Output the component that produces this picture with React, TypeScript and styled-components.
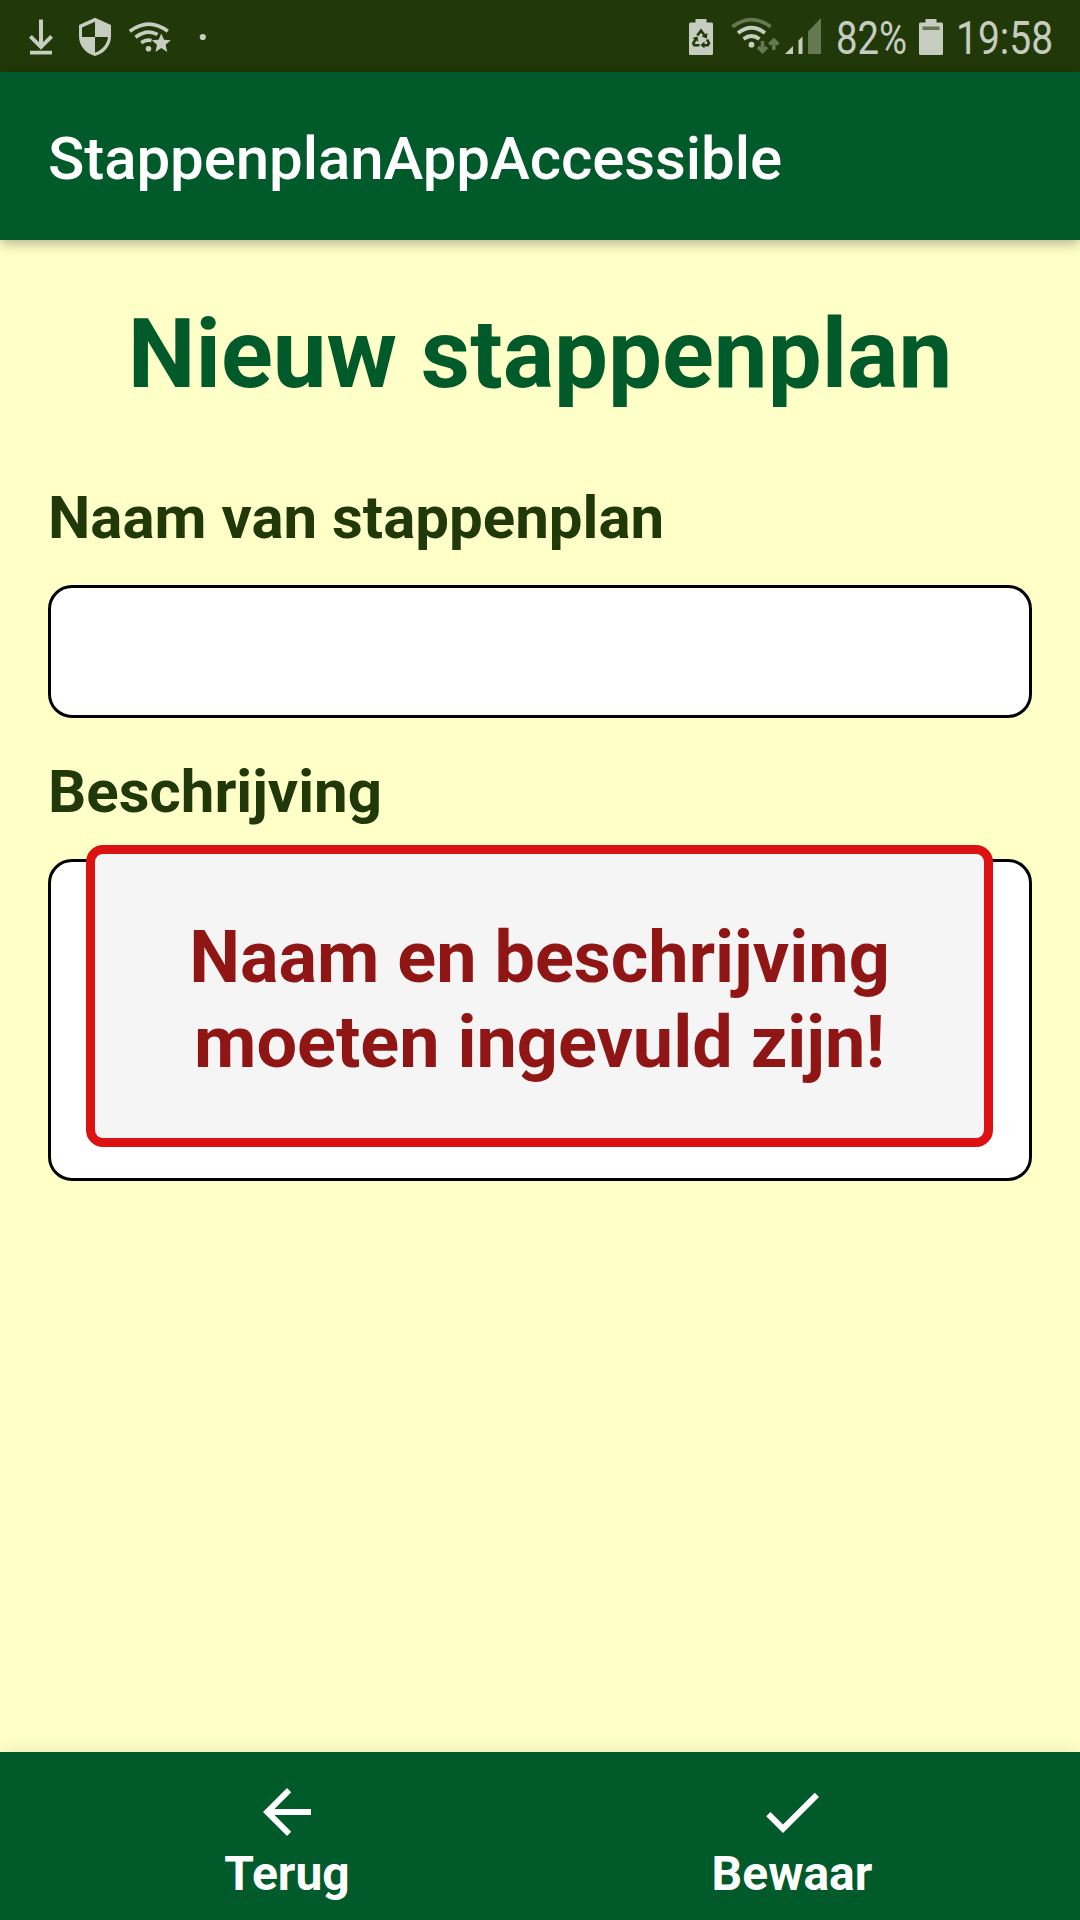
import React from "react";
import styled, { createGlobalStyle } from "styled-components";

const GlobalStyle = createGlobalStyle`
  html, body { margin: 0; padding: 0; }
  *, *::before, *::after { box-sizing: border-box; }
  body { font-family: Roboto, "Liberation Sans", sans-serif; }
`;

const colors = {
  dark: "#213909",
  primary: "#005a29",
  page: "#ffffc8",
  status: "#c6ccc0",
  faded: "#647851",
  error: "#dc1212",
  errorText: "#901515",
};

const Screen = styled.div`
  width: 1080px;
  height: 1920px;
  display: flex;
  flex-direction: column;
  background: ${colors.page};
  overflow: hidden;
`;

const StatusBar = styled.div`
  height: 72px;
  flex: none;
  display: flex;
  justify-content: space-between;
  background: ${colors.dark};
  color: ${colors.status};
`;

const StatusGroup = styled.div`
  display: flex;
  height: 72px;
`;

const StatusText = styled.span<{ $width: number; $gap: number; $scale: number }>`
  width: ${(p) => p.$width}px;
  margin-left: ${(p) => p.$gap}px;
  font-size: 45.5px;
  line-height: 77px;
  white-space: nowrap;
  transform: scaleX(${(p) => p.$scale});
  transform-origin: left center;
`;

const Glyph = styled.svg`
  display: block;
  height: 72px;
  flex: none;
`;

const AppBar = styled.header`
  height: 168px;
  flex: none;
  display: flex;
  align-items: center;
  padding: 5px 48px 0;
  background: ${colors.primary};
  box-shadow: 0 3px 12px rgba(0, 0, 0, 0.32);
  z-index: 1;
`;

const AppTitle = styled.span`
  color: #fff;
  font-size: 60px;
  font-weight: 500;
  line-height: 70px;
  letter-spacing: -0.08px;
`;

const Content = styled.main`
  flex: 1;
  display: flex;
  flex-direction: column;
  padding: 58px 48px 0;
`;

const Heading = styled.h1`
  margin: 0 0 73px;
  font-size: 96px;
  font-weight: 700;
  line-height: 112px;
  text-align: center;
  color: ${colors.primary};
`;

const Label = styled.label`
  display: block;
  height: 102px;
  font-size: 60px;
  font-weight: 700;
  line-height: 70px;
  color: ${colors.dark};
`;

const Field = styled.div<{ $height: number; $after: number }>`
  position: relative;
  height: ${(p) => p.$height}px;
  margin-bottom: ${(p) => p.$after}px;
  border: 3px solid #000;
  border-radius: 24px;
  background: #fff;
`;

const Toast = styled.div`
  position: absolute;
  left: 35px;
  top: -17px;
  width: 907px;
  height: 302px;
  padding-top: 61px;
  border: 9px solid ${colors.error};
  border-radius: 17px;
  background: #f5f5f5;
  color: ${colors.errorText};
  font-size: 72px;
  font-weight: 700;
  line-height: 85px;
  text-align: center;
`;

const BottomBar = styled.nav`
  height: 168px;
  flex: none;
  display: flex;
  justify-content: center;
  padding-right: 1px;
  background: ${colors.primary};
  box-shadow: 0 0 18px rgba(0, 0, 0, 0.1);
  z-index: 1;
`;

const NavItem = styled.div`
  width: 505px;
  padding-top: 24px;
  display: flex;
  flex-direction: column;
  align-items: center;
  color: #fff;
  font-size: 48px;
  font-weight: 700;
  line-height: 56px;
`;

const NavIcon = styled.svg`
  width: 72px;
  height: 72px;
  margin-bottom: -2px;
  fill: currentColor;
`;

const Notifications = () => (
  <Glyph width="230" viewBox="0 0 230 72" fill={colors.status}>
    <path d="M39 19.5h4v22.8l7.2-7.3 2.8 2.8L41 49.8l-12-12L31.8 35l7.2 7.3zM30 50.8h22v3.8H30z" />
    <path
      fillRule="evenodd"
      d="M95 17.8 111 25v11c0 10-6.800 17.500-16 20-9.200-2.500-16-10-16-20V25zM95 21.800V37h13c0 0-.5 11-13 15.800V37H82V27.500z"
    />
    <g fill="none" stroke={colors.status} strokeWidth="3.600">
      <path d="M129.800 31.300Q149 17 167.800 31.300" />
      <path d="M135.500 37.200Q147 28.500 157.500 34.500" />
      <path d="M141.200 42.800Q146 39.200 151.500 40.500" />
    </g>
    <circle cx="148.500" cy="48.700" r="2.800" />
    <path d="m161.300 33.400 2.700 6.300 6.800.6-5.200 4.500 1.600 7.300-5.900-4-5.900 4 1.600-7.300-5.200-4.500 6.800-.6z" />
    <circle cx="202.800" cy="37" r="3.100" />
  </Glyph>
);

const SystemIcons = () => (
  <Glyph width="140" viewBox="686 0 140 72" fill={colors.status}>
    <path d="M695.500 19h11v3.500h5q1.500 0 1.500 1.500v29.500q0 1.500-1.500 1.500h-21q-1.500 0-1.500-1.500V24q0-1.500 1.500-1.500h5z" />
    <g fill="none" stroke={colors.dark} strokeWidth="2.600">
      <path d="m697.300 35.500 3.700-4.800 4.300 5.600M707 39.500l2 3.700-1.300 2h-4.700M699.500 45.200h-5.200l-1-2 3-5" />
    </g>
    <g fill={colors.dark}>
      <path d="m707.500 33-.7 5.500-5.200-2zM704.500 41.500v7l-4-3.500zM692.500 38l5-1.500.8 5.200z" />
    </g>
    <path d="M732.300 26.800Q751.500 12.500 770.700 26.800" fill="none" stroke={colors.faded} strokeWidth="3.800" />
    <g fill="none" stroke={colors.status} strokeWidth="3.800">
      <path d="M738 33Q751.500 22.500 765 33" />
      <path d="M743.500 39Q751.500 33 759.500 39" />
    </g>
    <circle cx="751.500" cy="44.700" r="2.900" />
    <g fill="none" stroke={colors.faded} strokeWidth="3.600">
      <path d="M762.500 41v10.500M758 47l4.500 4.500 4.500-4.500M773.800 50V39.500M769.300 44.500l4.500-4.500 4.500 4.500" />
    </g>
    <path d="M785 54l8-8v8zM798.500 40.500l4-4V54h-4z" />
    <path fill={colors.faded} d="M808 31.500 821 18v36h-13z" />
  </Glyph>
);

const BatteryIcon = () => (
  <Glyph width="24" viewBox="919 0 24 72" fill={colors.status}>
    <path d="M925.500 19h11v3.500h5q1.500 0 1.500 1.500v29.500q0 1.500-1.500 1.500h-21q-1.500 0-1.500-1.500V24q0-1.500 1.500-1.500h5z" />
    <path fill={colors.faded} d="M922.500 26.500h17V30h-17z" />
  </Glyph>
);

export default function App() {
  return (
    <>
      <GlobalStyle />
      <Screen>
        <StatusBar>
          <StatusGroup>
            <Notifications />
          </StatusGroup>
          <StatusGroup>
            <SystemIcons />
            <StatusText $width={83.5} $gap={9.5} $scale={0.842}>82%</StatusText>
            <BatteryIcon />
            <StatusText $width={124} $gap={13} $scale={0.857}>19:58</StatusText>
          </StatusGroup>
        </StatusBar>
        <AppBar>
          <AppTitle>StappenplanAppAccessible</AppTitle>
        </AppBar>
        <Content>
          <Heading>Nieuw stappenplan</Heading>
          <Label>Naam van stappenplan</Label>
          <Field $height={133} $after={39} />
          <Label>Beschrijving</Label>
          <Field $height={322} $after={0}>
            <Toast role="alert">
              Naam en beschrijving
              <br />
              moeten ingevuld zijn!
            </Toast>
          </Field>
        </Content>
        <BottomBar>
          <NavItem>
            <NavIcon viewBox="0 0 24 24">
              <path d="M20 11H7.830l5.590-5.590L12 4l-8 8 8 8 1.410-1.410L7.830 13H20v-2z" />
            </NavIcon>
            Terug
          </NavItem>
          <NavItem>
            <NavIcon viewBox="0 0 24 24">
              <path d="M9 16.170 4.830 12l-1.420 1.410L9 19 21 7l-1.410-1.410z" />
            </NavIcon>
            Bewaar
          </NavItem>
        </BottomBar>
      </Screen>
    </>
  );
}
